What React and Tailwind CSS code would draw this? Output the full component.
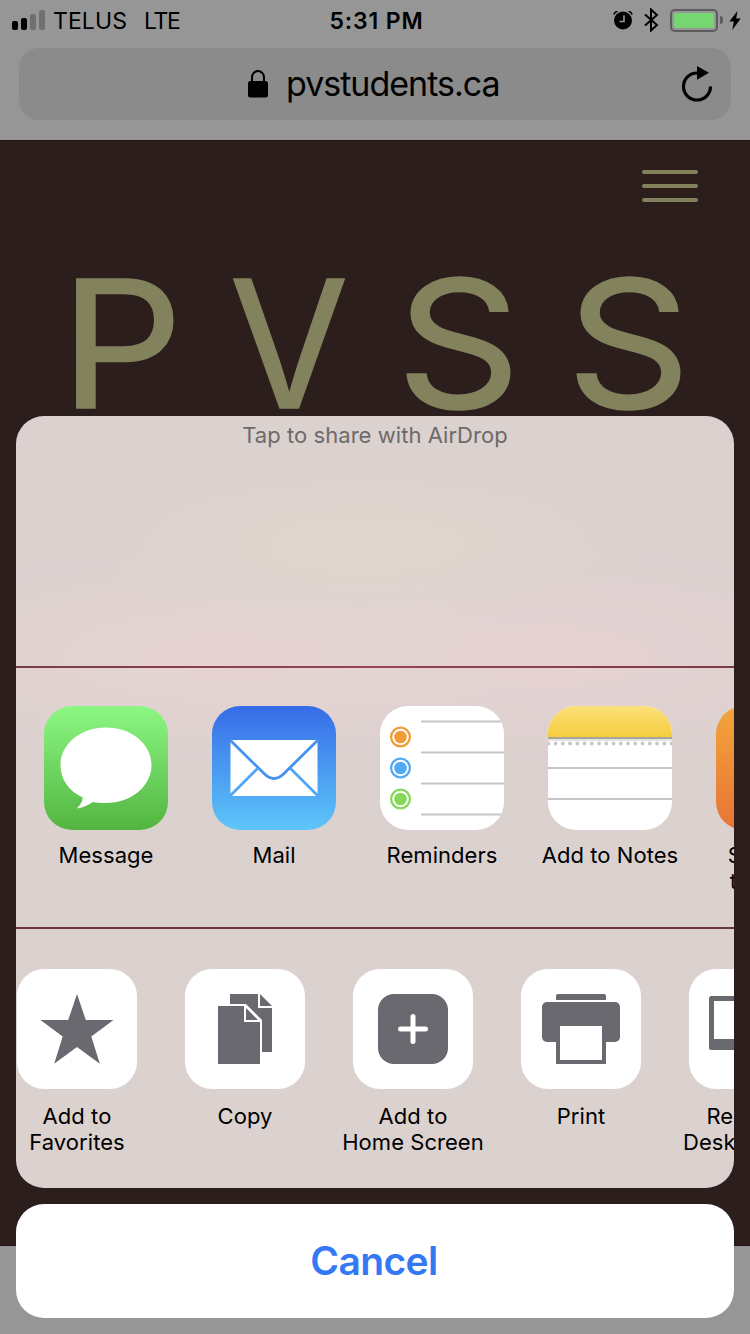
import React from "react";

const GRAY = "#69696f";

function SignalBars() {
  return (
    <div className="flex h-5 items-end gap-[3px]">
      <div className="h-[9px] w-[6px] rounded-[2px] bg-black" />
      <div className="h-[12px] w-[6px] rounded-[2px] bg-black" />
      <div className="h-[16px] w-[6px] rounded-[2px] bg-[#707070]" />
      <div className="h-[20px] w-[6px] rounded-[2px] bg-[#707070]" />
    </div>
  );
}

function StatusBar() {
  return (
    <div className="grid h-10 grid-cols-3 items-center pr-[9px] pl-3 text-[23px] leading-[38px] text-black">
      <div className="flex items-center">
        <SignalBars />
        <span className="ml-[8px] pt-[2px] tracking-[0.1px]">TELUS</span>
        <span className="ml-[17px] pt-[2px] tracking-[-1.4px]">LTE</span>
      </div>
      <div className="pt-[2px] text-center font-semibold tracking-[0.85px]">5:31 PM</div>
      <div className="flex items-center justify-end">
        <svg width="20" height="20" viewBox="0 0 20 20">
          <circle cx="10" cy="10.500" r="9" />
          <path d="M11 5.500v6H6.500" fill="none" stroke="#969696" strokeWidth="1.600" />
          <path d="M.4 4.800C.4 2.200 2.300.5 5.200 1L3.800 2.500C2.500 3 1.800 3.700 1.300 5zM19.600 4.800C19.600 2.200 17.700.5 14.800 1l1.400 1.500c1.300.5 2 1.200 2.500 2.500z" />
        </svg>
        <svg className="ml-[11px]" width="15" height="24" viewBox="0 0 15 24">
          <path d="M1 6.500l12 10.500-6 5.500V1.500l6 5.500L1 17.500" fill="none" stroke="#000" strokeWidth="2" />
        </svg>
        <div className="ml-[11px] h-[23px] w-[48px] rounded-[5px] border-2 border-[#5c5c5c] p-[2px]">
          <div className="h-full w-full rounded-[2px] bg-[#76d672]" />
        </div>
        <div className="ml-[2px] h-[8px] w-[3px] rounded-r-full bg-[#5c5c5c]" />
        <svg className="ml-[6px]" width="12" height="19" viewBox="0 0 12 19">
          <path d="M8.500 0L.3 10.500h4.500L3.300 19 11.700 7.500H7.200z" />
        </svg>
      </div>
    </div>
  );
}

function AddressBar() {
  return (
    <div className="mx-[19px] mt-2 flex h-[72px] items-center rounded-[20px] bg-[#8b8b8b] pr-[18px] pl-[229px]">
      <svg width="20" height="28" viewBox="0 0 20 28">
        <path d="M4 13V7.500a6 6.500 0 0 1 12 0V13" fill="none" stroke="#000" strokeWidth="2" />
        <rect y="11" width="20" height="16.500" rx="2.500" />
      </svg>
      <span className="ml-[18px] text-[34px] leading-[72px] tracking-[-1px] text-black">pvstudents.ca</span>
      <svg className="ml-auto" width="32" height="36" viewBox="0 0 32 36">
        <path d="M17 7h-1A13.500 13.500 0 1 0 29.500 20.500" fill="none" stroke="#000" strokeWidth="3.200" />
        <path d="M16 0l12 6.800-12 7z" />
      </svg>
    </div>
  );
}

function Page() {
  return (
    <div className="h-[1106px] border-y border-[#201616] bg-[#2d1e1e]">
      <div className="flex flex-col items-end gap-[10px] pt-[29px] pr-[52px]">
        <div className="h-1 w-14 rounded-full bg-[#82825c]" />
        <div className="h-1 w-14 rounded-full bg-[#82825c]" />
        <div className="h-1 w-14 rounded-full bg-[#82825c]" />
      </div>
      <svg className="mt-[58px] block" width="750" height="160" viewBox="0 0 750 160" fill="#82825c" stroke="#82825c" strokeWidth="1.600" fontFamily="Inter, sans-serif" fontSize="177">
        <text x="60" y="147.500" textLength="123" lengthAdjust="spacingAndGlyphs">P</text>
        <text x="229.500" y="147.500" textLength="119" lengthAdjust="spacingAndGlyphs">V</text>
        <text x="396.500" y="148" textLength="124" lengthAdjust="spacingAndGlyphs">S</text>
        <text x="566.500" y="148" textLength="124" lengthAdjust="spacingAndGlyphs">S</text>
      </svg>
    </div>
  );
}

function MessageIcon() {
  return (
    <svg width="124" height="124" viewBox="0 0 124 124">
      <defs>
        <linearGradient id="msg" x1="0" y1="0" x2="0" y2="1">
          <stop offset="0" stopColor="#8df784" />
          <stop offset="1" stopColor="#52b540" />
        </linearGradient>
      </defs>
      <rect width="124" height="124" fill="url(#msg)" />
      <path d="M62 21.500c25.500 0 45.500 16.500 45.500 37.500S87.500 97 62 97c-4.500 0-9-.2-13-1-5 3-10.500 6-16.500 6.500 3.500-3 6-6.500 6.200-11C24.500 85 16.500 73 16.500 59 16.500 38 36.500 21.500 62 21.500z" fill="#fff" />
    </svg>
  );
}

function MailIcon() {
  return (
    <svg width="124" height="124" viewBox="0 0 124 124">
      <defs>
        <linearGradient id="mail" x1="0" y1="0" x2="0" y2="1">
          <stop offset="0" stopColor="#366ce8" />
          <stop offset="1" stopColor="#5ec6f9" />
        </linearGradient>
      </defs>
      <rect width="124" height="124" fill="url(#mail)" />
      <rect x="18.500" y="34" width="87" height="56" rx="2" fill="#fff" />
      <path d="M18 34L52 67.500q10 10 20 0L106 34" fill="none" stroke="#4592ef" strokeWidth="2.800" />
      <path d="M45.500 62.500L18 90M78.500 62.500L106 90" stroke="#4fa6f3" strokeWidth="2.800" />
    </svg>
  );
}

function RemindersIcon() {
  const dots = [
    ["#f29c38", 31],
    ["#54aaf2", 62],
    ["#86d957", 93],
  ];
  return (
    <svg width="124" height="124" viewBox="0 0 124 124">
      <rect width="124" height="124" fill="#fff" />
      {dots.map(([color, y]) => (
        <g key={color} fill={color}>
          <circle cx="20.500" cy={y} r="9.400" fill="none" stroke={color} strokeWidth="2.300" />
          <circle cx="20.500" cy={y} r="6.300" />
        </g>
      ))}
      <path d="M41 15.500h83M41 46.500h83M41 77.500h83M41 108.500h83" stroke="#c6c6ca" strokeWidth="2.200" />
    </svg>
  );
}

function NotesIcon() {
  return (
    <svg width="124" height="124" viewBox="0 0 124 124">
      <defs>
        <linearGradient id="notes" x1="0" y1="0" x2="0" y2="1">
          <stop offset="0" stopColor="#fae078" />
          <stop offset="1" stopColor="#f6cd3e" />
        </linearGradient>
      </defs>
      <rect width="124" height="124" fill="#fff" />
      <rect width="124" height="31" fill="url(#notes)" />
      <rect y="31" width="124" height="2" fill="#a9a595" />
      <rect y="33" width="124" height="2" fill="#e3e3e3" />
      <path d="M.3 37.500h124" stroke="#c6c6c6" strokeWidth="3.800" strokeLinecap="round" strokeDasharray="0 7.250" />
      <path d="M0 62h124M0 93h124" stroke="#c5c5ca" strokeWidth="2" />
    </svg>
  );
}

function StarIcon() {
  return (
    <svg width="120" height="120" viewBox="0 0 120 120" fill={GRAY}>
      <path d="M60 25l8.800 26H96.500L74.300 67.500 82.800 94.800 60 78 37.200 94.800 45.700 67.500 23.500 51H51.200z" />
    </svg>
  );
}

function CopyIcon() {
  return (
    <svg width="120" height="120" viewBox="0 0 120 120" fill={GRAY}>
      <path d="M45 25h28v14h14v44H77V51L61 35H45z" />
      <path d="M75 25l12 12H75z" />
      <path d="M33 37h26v16h16v42H33z" />
      <path d="M61 39l12 12H61z" />
    </svg>
  );
}

function HomeIcon() {
  return (
    <svg width="120" height="120" viewBox="0 0 120 120">
      <rect x="25" y="25" width="70" height="70" rx="16" fill={GRAY} />
      <path d="M60 47.500v25M47.500 60h25" stroke="#fff" strokeWidth="5" strokeLinecap="round" />
    </svg>
  );
}

function PrintIcon() {
  return (
    <svg width="120" height="120" viewBox="0 0 120 120" fill={GRAY}>
      <path d="M35 31v-4a2 2 0 0 1 2-2h46a2 2 0 0 1 2 2v4z" />
      <rect x="21" y="33" width="78" height="40" rx="5" />
      <path d="M35 57h50v38H35z" />
      <path d="M39 57h42v34H39z" fill="#fff" />
    </svg>
  );
}

function DesktopIcon() {
  return (
    <svg width="120" height="120" viewBox="0 0 120 120">
      <rect x="20" y="27" width="80" height="54" rx="2.500" fill={GRAY} />
      <rect x="25" y="32" width="70" height="38" fill="#fff" />
    </svg>
  );
}

function AppItem({ label, children }) {
  return (
    <div className="flex w-[168px] shrink-0 flex-col items-center">
      <div className="size-[124px] overflow-hidden rounded-[28px]">{children}</div>
      <div className="mt-3 text-center whitespace-pre-line">{label}</div>
    </div>
  );
}

function ActionItem({ label, children }) {
  return (
    <div className="flex w-[168px] shrink-0 flex-col items-center">
      <div className="size-[120px] overflow-hidden rounded-[27px] bg-white">{children}</div>
      <div className="mt-[14px] text-center whitespace-pre-line">{label}</div>
    </div>
  );
}

function ShareSheet() {
  return (
    <div className="flex h-[772px] flex-col overflow-hidden rounded-[28px] bg-[#dbd1cf] bg-[radial-gradient(ellipse_300px_85px_at_350px_128px,#dfd6ceff_20%,#dfd6ce00),radial-gradient(ellipse_370px_110px_at_200px_240px,#e6d4d3ff_10%,#e6d4d300),radial-gradient(ellipse_340px_110px_at_540px_240px,#e5d2d3ff_20%,#e5d2d300)] text-[22px] leading-[26px] tracking-[0.05px] text-black">
      <div className="h-[250px] pt-[6px] text-center text-[#6d6a6a]">Tap to share with AirDrop</div>
      <div className="h-[2px] bg-linear-to-r from-[#793c46] via-[#964552] to-[#7d3a48]" />
      <div className="h-[259px] pt-[38px]">
        <div className="flex pl-[6px]">
          <AppItem label="Message"><MessageIcon /></AppItem>
          <AppItem label="Mail"><MailIcon /></AppItem>
          <AppItem label="Reminders"><RemindersIcon /></AppItem>
          <AppItem label="Add to Notes"><NotesIcon /></AppItem>
          <AppItem label={"Save PDF\nto iBooks"}>
            <div className="size-full bg-linear-to-b from-[#f1a43b] to-[#e97335]" />
          </AppItem>
        </div>
      </div>
      <div className="flex-1 border-t-2 border-[#68363d] pt-[40px]">
        <div className="-ml-[23px] flex">
          <ActionItem label={"Add to\nFavorites"}><StarIcon /></ActionItem>
          <ActionItem label="Copy"><CopyIcon /></ActionItem>
          <ActionItem label={"Add to\nHome Screen"}><HomeIcon /></ActionItem>
          <ActionItem label="Print"><PrintIcon /></ActionItem>
          <ActionItem label={"Request\nDesktop Site"}><DesktopIcon /></ActionItem>
        </div>
      </div>
    </div>
  );
}

export default function App() {
  return (
    <div className="relative h-[1334px] w-[750px] overflow-hidden bg-[#969696] font-['Inter',sans-serif]">
      <div className="h-[140px]">
        <StatusBar />
        <AddressBar />
      </div>
      <Page />
      <div className="absolute inset-x-4 bottom-4 flex flex-col gap-4">
        <ShareSheet />
        <button className="h-[114px] rounded-[28px] bg-white pr-[2px] text-[39px] font-semibold tracking-[-0.6px] text-[#3478f6]">
          Cancel
        </button>
      </div>
    </div>
  );
}
